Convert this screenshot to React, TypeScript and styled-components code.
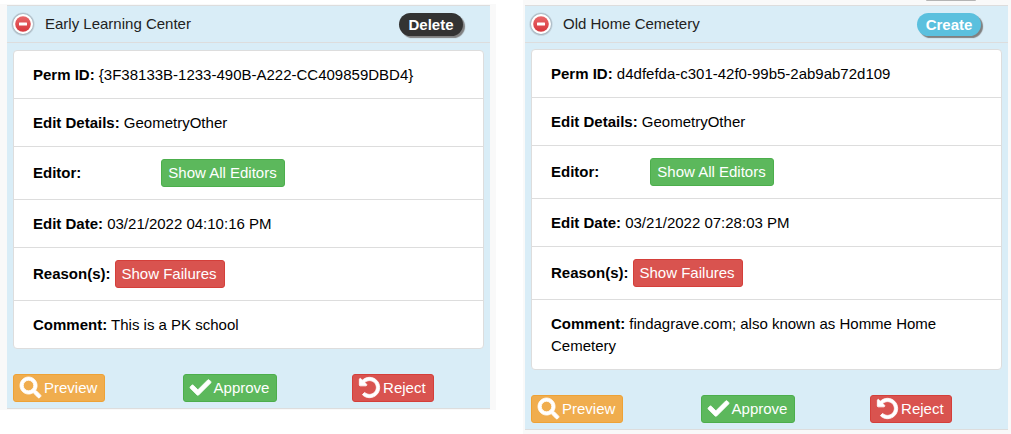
import React from "react";
import styled, { createGlobalStyle } from "styled-components";
import { FaSearch, FaCheck, FaUndoAlt } from "react-icons/fa";

const GlobalStyle = createGlobalStyle`
  *, *::before, *::after { box-sizing: border-box; }
  body {
    margin: 0;
    background: #fff;
    color: #000;
    font: 15px/22px "Liberation Sans", Arial, sans-serif;
  }
`;

const Page = styled.main`
  display: grid;
  grid-template-columns: 496fr 488fr;
  column-gap: 27px;
  align-items: start;
`;

const Lane = styled.section<{ $continued?: boolean }>`
  margin-top: ${(p) => (p.$continued ? 0 : 4)}px;
  padding: ${(p) => (p.$continued ? "0 3px 4px 2px" : "1px 6px 1px 7px")};
  background: #f9f9f9;
`;

const PreviousEdge = styled.div`
  height: 5px;
  padding-right: 32px;

  &::before {
    content: "";
    display: block;
    width: 50px;
    height: 1px;
    margin-left: auto;
    border-radius: 0 0 4px 4px;
    background: #b4b4b4;
  }
`;

const Card = styled.article`
  background: #d9edf7;
  border: solid #ddd;
  border-width: 1px 0;
`;

const Header = styled.header`
  display: flex;
  align-items: center;
  height: 37px;
  padding: 0 27px 0 4px;
  border-bottom: 1px solid #ddd;
`;

const CollapseButton = styled.button`
  display: flex;
  width: 24px;
  height: 24px;
  padding: 0;
  border: 0;
  background: none;
`;

const Title = styled.h2`
  flex: 1;
  margin: 0 0 0 10px;
  color: #222;
  font-size: 15px;
  font-weight: 400;
`;

const Badge = styled.span<{ $color: string }>`
  width: 64px;
  height: 23px;
  border-radius: 12px;
  background: ${(p) => p.$color};
  box-shadow: 2px 2px 1px #808080;
  color: #fff;
  font-weight: 700;
  line-height: 23px;
  text-align: center;
`;

const List = styled.ul<{ $top: number }>`
  margin: ${(p) => p.$top}px 6px 0;
  padding: 0;
  list-style: none;
  background: #fff;
  border: 1px solid #ddd;
  border-radius: 4px;
`;

const Row = styled.li`
  padding: 13px 19px 12px;

  & + & { border-top: 1px solid #ddd; }
`;

const ButtonRow = styled(Row)`
  display: flex;
  align-items: center;
  padding: 12px 19px;
`;

const tones = {
  green: ["#5cb85c", "#4cae4c"],
  red: ["#d9534f", "#d43f3a"],
  orange: ["#f0ad4e", "#eea236"],
};

const Button = styled.button<{ $tone: keyof typeof tones; $gap?: number }>`
  display: inline-flex;
  align-items: center;
  gap: 3px;
  height: 28px;
  margin-left: ${(p) => p.$gap ?? 0}px;
  padding: 0 7px 0 6px;
  border: 1px solid ${(p) => tones[p.$tone][1]};
  border-radius: 3px;
  background: ${(p) => tones[p.$tone][0]};
  color: #fff;
  font: inherit;
  white-space: nowrap;

  svg {
    margin-bottom: 2px;
    overflow: visible;
    stroke-width: 20px;
  }
`;

const Actions = styled.footer`
  display: grid;
  grid-template-columns: 36% 36% auto;
  justify-items: start;
  padding: 25px 6px 6px;
`;

const CollapseIcon = () => (
  <svg width="24" height="24" viewBox="0 0 24 24" aria-hidden="true">
    <defs>
      <linearGradient id="disc" x1="0" y1="0" x2="0" y2="1">
        <stop offset="0" stopColor="#e8686a" />
        <stop offset="1" stopColor="#d8363c" />
      </linearGradient>
    </defs>
    <circle cx="12" cy="12.2" r="11.6" fill="#c3d3dc" />
    <circle cx="12" cy="12.1" r="10.8" fill="#a9b8c2" />
    <circle cx="12" cy="12" r="10" fill="#fff" />
    <circle cx="12" cy="12" r="7.8" fill="url(#disc)" />
    <rect x="8" y="10.6" width="8" height="2.8" rx="0.5" fill="#fff" />
  </svg>
);

interface Edit {
  title: string;
  kind: string;
  kindColor: string;
  permId: string;
  date: string;
  comment: string;
  editorGap: number;
  listTop: number;
}

const EditCard = ({ edit }: { edit: Edit }) => (
  <Card>
    <Header>
      <CollapseButton type="button" aria-label="Collapse">
        <CollapseIcon />
      </CollapseButton>
      <Title>{edit.title}</Title>
      <Badge $color={edit.kindColor}>{edit.kind}</Badge>
    </Header>
    <List $top={edit.listTop}>
      <Row><b>Perm ID:</b> {edit.permId}</Row>
      <Row><b>Edit Details:</b> GeometryOther</Row>
      <ButtonRow>
        <b>Editor:</b>
        <Button type="button" $tone="green" $gap={edit.editorGap}>Show All Editors</Button>
      </ButtonRow>
      <Row><b>Edit Date:</b> {edit.date}</Row>
      <ButtonRow>
        <b>Reason(s):</b>
        <Button type="button" $tone="red" $gap={4}>Show Failures</Button>
      </ButtonRow>
      <Row><b>Comment:</b> {edit.comment}</Row>
    </List>
    <Actions>
      <Button type="button" $tone="orange"><FaSearch size={21} />Preview</Button>
      <Button type="button" $tone="green"><FaCheck size={21} />Approve</Button>
      <Button type="button" $tone="red"><FaUndoAlt size={21} />Reject</Button>
    </Actions>
  </Card>
);

const deletion: Edit = {
  title: "Early Learning Center",
  kind: "Delete",
  kindColor: "#333",
  permId: "{3F38133B-1233-490B-A222-CC409859DBD4}",
  date: "03/21/2022 04:10:16 PM",
  comment: "This is a PK school",
  editorGap: 80,
  listTop: 7,
};

const creation: Edit = {
  title: "Old Home Cemetery",
  kind: "Create",
  kindColor: "#5bc0de",
  permId: "d4dfefda-c301-42f0-99b5-2ab9ab72d109",
  date: "03/21/2022 07:28:03 PM",
  comment: "findagrave.com; also known as Homme Home Cemetery",
  editorGap: 51,
  listTop: 6,
};

export default function App() {
  return (
    <>
      <GlobalStyle />
      <Page>
        <Lane>
          <EditCard edit={deletion} />
        </Lane>
        <Lane $continued>
          <PreviousEdge />
          <EditCard edit={creation} />
        </Lane>
      </Page>
    </>
  );
}
